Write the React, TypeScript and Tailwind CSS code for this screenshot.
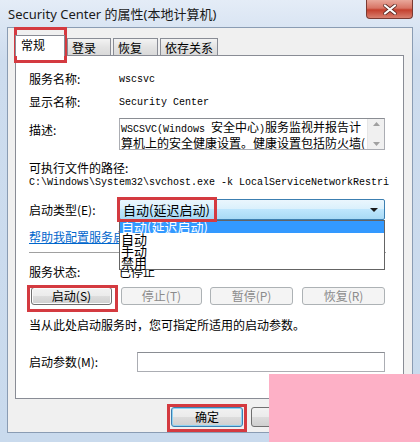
import React from 'react';

const Btn = ({ label, disabled, w }: { label: string; disabled?: boolean; w: string }) => (
  <div
    className={`${w} h-[18px] flex items-center justify-center rounded-[3px] border text-[12px] leading-[16px] ${
      disabled
        ? 'border-[#adb2b5] bg-[#f4f4f4] text-[#8b8b8b]'
        : 'border-[#707070] bg-[linear-gradient(#f2f2f2_0%,#ebebeb_50%,#dddddd_50%,#cfcfcf_100%)] shadow-[inset_0_0_0_1px_#fbfbfb] text-black'
    }`}
  >
    {label}
  </div>
);

export default function App() {
  return (
    <div className="relative w-[420px] h-[442px] overflow-hidden bg-[linear-gradient(#e4ecf7,#cddcee_60px,#c9daed)] font-['Noto_Sans_CJK_SC','Noto_Sans',sans-serif] text-[12px] text-black">
      {/* title bar */}
      <div className="h-[27px] flex items-start">
        <div className="pl-[8px] pt-[5px] text-[13px] leading-[19px] font-['Noto_Sans','Noto_Sans_CJK_SC',sans-serif] text-[#1a1a1a]">
          Security Center 的属性(本地计算机)
        </div>
        <div className="ml-auto mr-[7px] w-[47px] h-[19px] rounded-b-[4px] border border-t-0 border-[#7a3a32] bg-[linear-gradient(#e9a89b_0%,#d87465_45%,#c4402e_55%,#d8806f_100%)] flex items-center justify-center">
          <svg width="14" height="11" viewBox="0 0 14 11">
            <path d="M2 1.5 L12 9.5 M12 1.5 L2 9.5" stroke="#5a2a24" strokeWidth="3.6" strokeLinecap="round" />
            <path d="M2 1.5 L12 9.5 M12 1.5 L2 9.5" stroke="#ffffff" strokeWidth="2.2" strokeLinecap="round" />
          </svg>
        </div>
      </div>

      {/* client area */}
      <div className="mx-[7px] h-[406px] bg-[#f0f0f0] border border-[#8a9cb3]">
        {/* tabs */}
        <div className="h-[27px] flex items-end">
          <div className="relative z-10 -mb-px ml-[7px] w-[50px] h-[21px] bg-white border border-b-0 border-[#898c95] pl-[5px] pt-[1px] leading-[16px]">
            常规
          </div>
          <div className="ml-[2px] w-[44px] h-[17px] border border-b-0 border-[#898c95] bg-[linear-gradient(#f3f3f3,#e3e3e3_50%,#d9d9d9)] pl-[4px] leading-[17px]">
            登录
          </div>
          <div className="ml-[2px] w-[45px] h-[17px] border border-b-0 border-[#898c95] bg-[linear-gradient(#f3f3f3,#e3e3e3_50%,#d9d9d9)] pl-[4px] leading-[17px]">
            恢复
          </div>
          <div className="ml-[2px] w-[58px] h-[17px] border border-b-0 border-[#898c95] bg-[linear-gradient(#f3f3f3,#e3e3e3_50%,#d9d9d9)] pl-[4px] leading-[17px]">
            依存关系
          </div>
        </div>

        {/* panel */}
        <div className="relative ml-[7px] w-[389px] h-[344px] bg-white border border-[#898c95] pl-[13px] flex flex-col">
          <div className="mt-[15px] h-[16px] flex items-center">
            <div className="w-[90px] leading-[16px]">服务名称:</div>
            <div className="font-['Liberation_Mono',monospace] text-[10px]">wscsvc</div>
          </div>
          <div className="mt-[7px] h-[16px] flex items-center">
            <div className="w-[90px] leading-[16px]">显示名称:</div>
            <div className="font-['Liberation_Mono',monospace] text-[10px]">Security Center</div>
          </div>
          <div className="mt-[8px] h-[32px] flex items-start">
            <div className="w-[90px] pt-[4px] leading-[16px]">描述:</div>
            <div className="w-[266px] h-[32px] border border-[#abadb3] border-t-[#8a8d93] flex">
              <div className="flex-1 overflow-hidden whitespace-nowrap pl-[1px] leading-[13px] pt-[1px]">
                <div>
                  <span className="font-['Liberation_Mono',monospace] text-[10px]">WSCSVC(Windows </span>安全中心
                  <span className="font-['Liberation_Mono',monospace] text-[10px]">)</span>服务监视并报告计
                </div>
                <div>算机上的安全健康设置。健康设置包括防火墙(</div>
              </div>
              <div className="w-[17px] h-full bg-[#f0f0f0] border-l border-[#e6e6e6] flex flex-col items-center justify-between py-[3px]">
                <svg width="7" height="4" viewBox="0 0 7 4">
                  <path d="M0 4 L3.5 0 L7 4 Z" fill="#a0a0a0" />
                </svg>
                <svg width="7" height="4" viewBox="0 0 7 4">
                  <path d="M0 0 L3.5 4 L7 0 Z" fill="#a0a0a0" />
                </svg>
              </div>
            </div>
          </div>
          <div className="mt-[10px] h-[16px] leading-[16px]">可执行文件的路径:</div>
          <div className="h-[14px] leading-[14px] font-['Liberation_Mono',monospace] text-[10px] whitespace-nowrap">
            C:\Windows\System32\svchost.exe -k LocalServiceNetworkRestri
          </div>
          <div className="mt-[9px] h-[21px] flex items-center">
            <div className="w-[90px] leading-[16px]">启动类型(E):</div>
            <div className="w-[266px] h-[21px] rounded-[2px] border border-[#3c7fb1] bg-[linear-gradient(#eaf6fd_0%,#d9f0fc_50%,#bee6fd_50%,#a7d9f5_100%)] flex items-center pl-[3px] pr-[6px]">
              <span className="text-[13px] leading-[16px]">自动(延迟启动)</span>
              <svg className="ml-auto" width="8" height="4" viewBox="0 0 8 4">
                <path d="M0 0 L8 0 L4 4 Z" fill="#1a1a1a" />
              </svg>
            </div>
          </div>
          <div className="mt-[9px] h-[16px] leading-[16px] text-[#0066cc] underline whitespace-nowrap">帮助我配置服务启动选项。</div>
          <div className="mt-[7px] mr-[17px] h-[2px] border-t border-[#a0a0a0] border-b border-b-white"></div>
          <div className="mt-[10px] h-[16px] flex items-center">
            <div className="w-[90px] leading-[16px]">服务状态:</div>
            <div className="leading-[16px]">已停止</div>
          </div>
          <div className="mt-[7px] h-[18px] flex pl-[2px]">
            <Btn label="启动(S)" w="w-[81px]" />
            <div className="ml-[9px]"><Btn label="停止(T)" w="w-[81px]" disabled /></div>
            <div className="ml-[8px]"><Btn label="暂停(P)" w="w-[83px]" disabled /></div>
            <div className="ml-[9px]"><Btn label="恢复(R)" w="w-[83px]" disabled /></div>
          </div>
          <div className="mt-[12px] h-[16px] leading-[16px]">当从此处启动服务时，您可指定所适用的启动参数。</div>
          <div className="mt-[19px] h-[20px] flex items-center">
            <div className="w-[108px] leading-[16px]">启动参数(M):</div>
            <div className="w-[248px] h-[20px] border border-[#abadb3] border-t-[#8a8d93] bg-white"></div>
          </div>

          {/* open dropdown list */}
          <div className="absolute left-[103px] top-[164px] w-[266px] h-[50px] bg-white border border-[#646464] text-[13px] leading-[12px]">
            <div className="h-[12px] bg-[#3399ff] text-white pl-[1px]">自动(延迟启动)</div>
            <div className="pl-[1px]">自动</div>
            <div className="pl-[1px]">手动</div>
            <div className="pl-[1px]">禁用</div>
          </div>
        </div>

        {/* bottom buttons */}
        <div className="mt-[8px] h-[20px] flex pl-[163px]">
          <div className="w-[72px] h-[20px] flex items-center justify-center rounded-[3px] border border-[#3c7fb1] bg-[linear-gradient(#f2f2f2_0%,#ebebeb_50%,#dddddd_50%,#cfcfcf_100%)] shadow-[inset_0_0_0_1px_#8fd3f3] leading-[16px]">
            确定
          </div>
          <div className="ml-[8px] w-[72px] h-[20px] flex items-center justify-center rounded-[3px] border border-[#707070] bg-[linear-gradient(#f2f2f2_0%,#ebebeb_50%,#dddddd_50%,#cfcfcf_100%)] leading-[16px]">
            取消
          </div>
        </div>
      </div>

      {/* red highlight boxes */}
      <div className="absolute left-[14px] top-[27px] w-[53px] h-[36px] border-[3px] border-[#d43a40]"></div>
      <div className="absolute left-[117px] top-[197px] w-[100px] h-[25px] border-[3px] border-[#d43a40]"></div>
      <div className="absolute left-[27px] top-[285px] w-[91px] h-[27px] border-[3px] border-[#d43a40]"></div>
      <div className="absolute left-[167px] top-[404px] w-[80px] h-[28px] border-[3px] border-[#d43a40]"></div>

      {/* pink cover */}
      <div className="absolute left-[269px] top-[374px] right-0 bottom-0 bg-[#fdb0c6]"></div>
    </div>
  );
}
